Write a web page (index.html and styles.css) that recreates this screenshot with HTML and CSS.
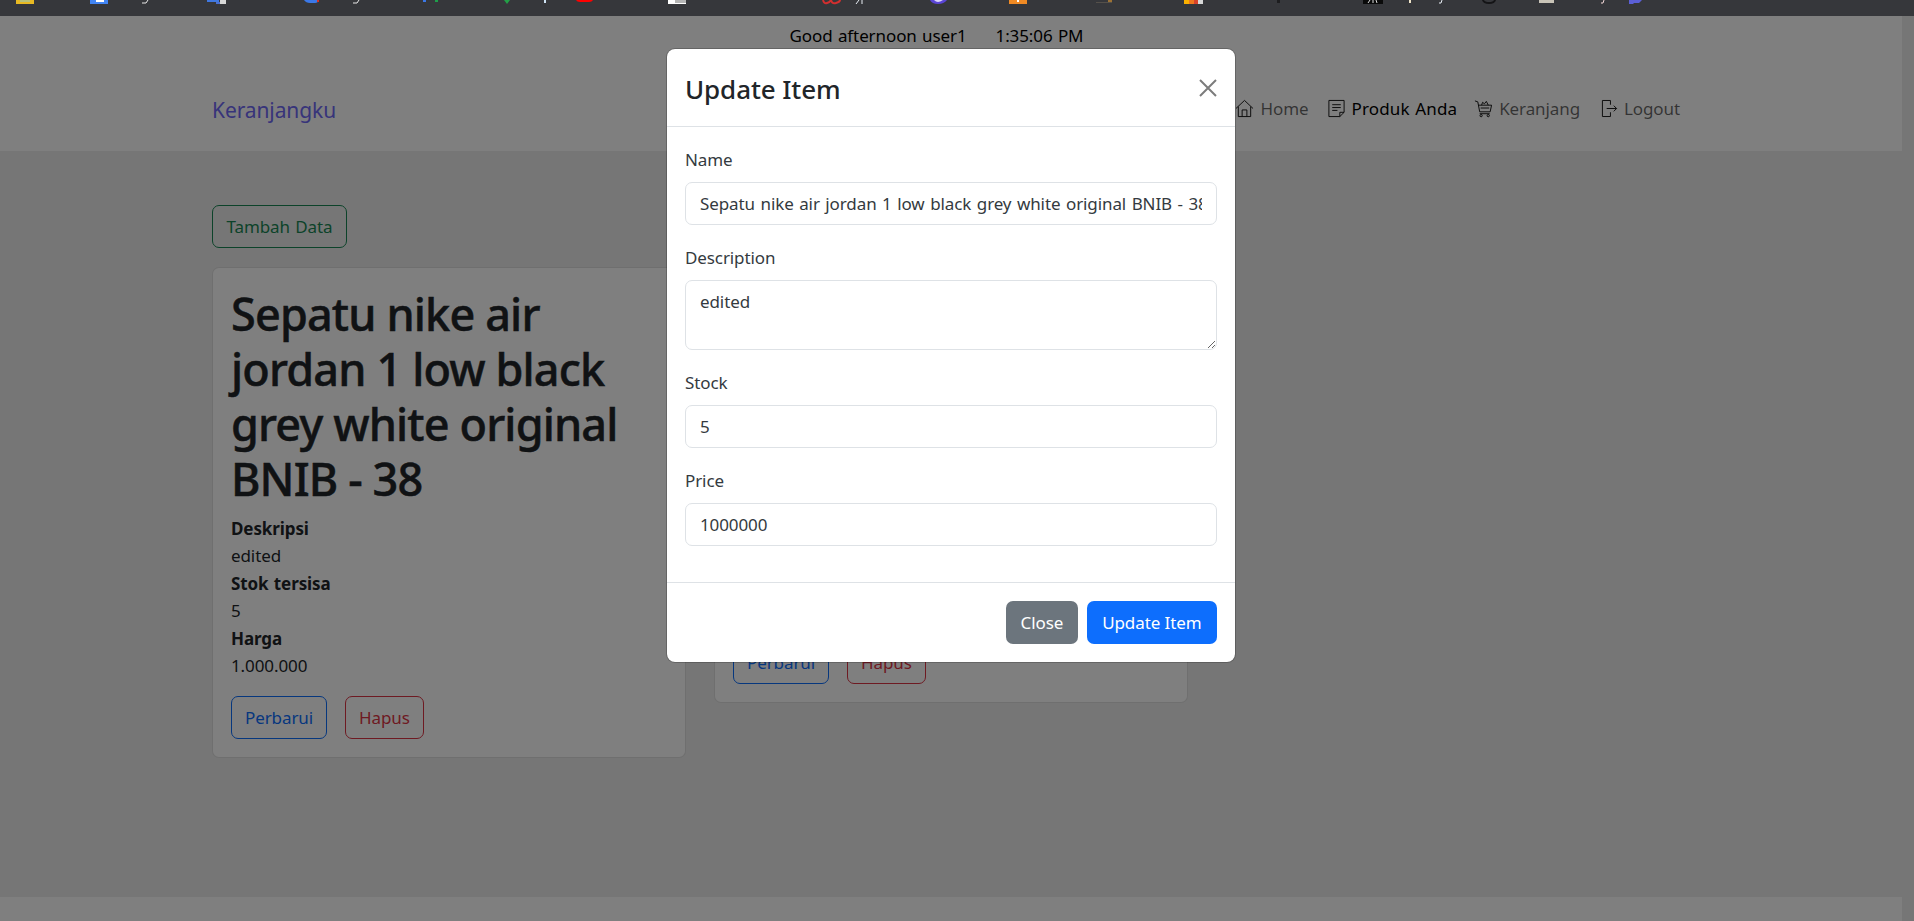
FILE: index.html
```html
<!DOCTYPE html>
<html lang="id">
<head>
  <meta charset="UTF-8">
  <title>Keranjangku</title>
  <meta name="viewport" content="width=device-width, initial-scale=1.0">
  <link rel="stylesheet" href="styles.css">
</head>
<body>

  <!-- Bookmarks strip, cut off by the crop: only the bottom of each icon shows -->
  <svg class="bookmarks" width="1914" height="16" viewBox="0 0 1914 16" aria-hidden="true">
    <rect x="16" y="0" width="18" height="4" fill="#e8b923"/>
    <rect x="20" y="0" width="10" height="2" fill="#b9c27a"/>
    <rect x="90" y="0" width="18" height="4" fill="#4285f4"/>
    <rect x="96" y="0" width="8" height="2" fill="#fff"/>
    <path d="M142 3h4l2-3" stroke="#e8e8e8" fill="none"/>
    <rect x="207" y="0" width="12" height="2" fill="#3f77e0"/>
    <rect x="216" y="2" width="4" height="2" fill="#4a6fd0"/>
    <rect x="220" y="0" width="6" height="4" fill="#d8d8d8"/>
    <path d="M304 0q2 3 6 3h5q3 0 4-3z" fill="#3b78e7"/>
    <rect x="317" y="0" width="2" height="2" fill="#d93025"/>
    <path d="M353 3h4l2-3" stroke="#e8e8e8" fill="none"/>
    <rect x="423" y="0" width="3" height="2" fill="#3b78e7"/>
    <rect x="435" y="0" width="3" height="2" fill="#1e9e4a"/>
    <path d="M504 0h6l-3 4z" fill="#23a047"/>
    <rect x="544" y="0" width="2" height="3" fill="#cfe3f5"/>
    <path d="M576 0h17q-1 2-4 2h-9q-3 0-4-2z" fill="#f00"/>
    <rect x="668" y="0" width="18" height="4" fill="#fff"/>
    <rect x="675" y="0" width="11" height="3" fill="#b5b5b5"/>
    <path d="M823 0q1 4 4 3t4-3q1 4 5 3t4-3" stroke="#d32f2f" stroke-width="2" fill="none"/>
    <path d="M856 4l3-4M862 4v-4" stroke="#e8eef5" fill="none"/>
    <path d="M930 0q2 4 8 4t9-4z" fill="#5a45d6"/>
    <path d="M934 0q2 2 4 2t5-2z" fill="#dcd6fa"/>
    <rect x="1009" y="0" width="18" height="4" fill="#f08a24"/>
    <rect x="1017" y="0" width="2" height="2" fill="#fff"/>
    <rect x="1096" y="2" width="16" height="1" fill="#55504a"/>
    <rect x="1108" y="0" width="4" height="2" fill="#9c7133"/>
    <rect x="1184" y="0" width="5" height="4" fill="#fbb100"/>
    <rect x="1189" y="0" width="5" height="4" fill="#f0781e"/>
    <rect x="1194" y="0" width="4" height="4" fill="#d9432a"/>
    <rect x="1198" y="0" width="5" height="4" fill="#d8d8d8"/>
    <rect x="1277" y="0" width="3" height="3" fill="#1d1d1f"/>
    <rect x="1363" y="0" width="20" height="4" fill="#0a0a0a"/>
    <path d="M1368 3l2-3M1373 3v-3M1377 3l-1-3" stroke="#ddd" fill="none"/>
    <rect x="1409" y="0" width="2" height="3" fill="#f0e4c8"/>
    <path d="M1439 3h2l1-3" stroke="#e8eef5" fill="none"/>
    <path d="M1482 0q1 4 7 4t7-4h-2q-1 2-5 2t-5-2z" fill="#141416"/>
    <rect x="1539" y="0" width="15" height="3" fill="#c9c4b8"/>
    <path d="M1601 3h2l1-3" stroke="#f3d8d8" fill="none"/>
    <path d="M1629 0h13l-3 3h-5l-1 1h-4z" fill="#5b5fd6"/>
  </svg>

  <div class="page">
    <div class="content">
      <header class="navbar">
        <div class="greeting">
          <span>Good afternoon user1</span>
          <span>1:35:06 PM</span>
        </div>
        <div class="nav-row">
          <a class="brand" href="#">Keranjangku</a>
          <nav class="nav-links">
            <a href="#" class="nav-home">
              <svg class="nav-icon" viewBox="0 0 20 20"><path d="M1 10 10 1.5 19 10M3.5 8V18.5H16.5V8M7.5 18.5V11.5H12.5V18.5"/></svg>
              Home
            </a>
            <a href="#" class="active">
              <svg class="nav-icon" viewBox="0 0 20 20"><path d="M2 1.5H18V14L13.5 18.5H2ZM13.5 18.5V14H18M5.5 6H14.5M5.5 9H14.5M5.5 12H11"/></svg>
              Produk Anda
            </a>
            <a href="#">
              <svg class="nav-icon" viewBox="0 0 20 20"><path d="M1 2 4 3 6 13.5H17L18.5 6.5H5M7 9.5H16M8 6.5 9 3.5 11 5 13 2.5 15 6.5M6 15.5H16.5"/><circle cx="7.5" cy="17.5" r="1.2"/><circle cx="15" cy="17.5" r="1.2"/></svg>
              Keranjang
            </a>
            <a href="#">
              <svg class="nav-icon nav-icon-small" viewBox="0 0 18 20"><path d="M10 6V1.5H1.5V18.5H10V14M6 10H16.5M13.5 7 16.5 10 13.5 13"/></svg>
              Logout
            </a>
          </nav>
        </div>
      </header>

      <main class="main">
        <a class="btn btn-outline-success add-btn" href="#">Tambah Data</a>
        <div class="card-grid">
          <div class="card">
            <h1 class="card-title">Sepatu nike air jordan 1 low black grey white original BNIB - 38</h1>
            <div class="card-info">
              <b>Deskripsi</b>
              <span>edited</span>
              <b>Stok tersisa</b>
              <span>5</span>
              <b>Harga</b>
              <span>1.000.000</span>
            </div>
            <div class="card-actions">
              <a class="btn btn-outline-primary" href="#">Perbarui</a>
              <a class="btn btn-outline-danger" href="#">Hapus</a>
            </div>
          </div>
          <div class="card">
            <h1 class="card-title">Sepatu nike air jordan 1 low black grey white</h1>
            <div class="card-info">
              <b>Deskripsi</b>
              <span>edited</span>
              <b>Stok tersisa</b>
              <span>5</span>
              <b>Harga</b>
              <span>1.000.000</span>
            </div>
            <div class="card-actions">
              <a class="btn btn-outline-primary" href="#">Perbarui</a>
              <a class="btn btn-outline-danger" href="#">Hapus</a>
            </div>
          </div>
        </div>
      </main>

      <footer class="footer"></footer>
    </div>

    <!-- Backdrop + modal -->
    <div class="backdrop">
      <div class="modal">
        <div class="modal-header">
          <h5 class="modal-title">Update Item</h5>
          <button class="modal-close" aria-label="Close">
            <svg viewBox="0 0 18 18" width="18" height="18"><path d="M1 1 17 17M17 1 1 17"/></svg>
          </button>
        </div>
        <form class="modal-body">
          <div class="form-group">
            <label for="itemName">Name</label>
            <input id="itemName" type="text" value="Sepatu nike air jordan 1 low black grey white original BNIB - 38">
          </div>
          <div class="form-group">
            <label for="itemDescription">Description</label>
            <textarea id="itemDescription">edited</textarea>
          </div>
          <div class="form-group">
            <label for="itemStock">Stock</label>
            <input id="itemStock" type="number" value="5">
          </div>
          <div class="form-group">
            <label for="itemPrice">Price</label>
            <input id="itemPrice" type="number" value="1000000">
          </div>
        </form>
        <div class="modal-footer">
          <button class="btn btn-secondary">Close</button>
          <button class="btn btn-primary">Update Item</button>
        </div>
      </div>
    </div>
  </div>

</body>
</html>
```

FILE: styles.css
```css
* {
  box-sizing: border-box;
}

html,
body {
  height: 100%;
}

body {
  margin: 0;
  overflow: hidden;
  font-family: "Noto Sans", "Open Sans", sans-serif;
  font-size: 17px;
  line-height: 27px;
  letter-spacing: -0.1px;
  word-spacing: 1px;
  color: #212529;
  background-color: #36373b;
}

.bookmarks {
  display: block;
  background-color: #36373b;
}

.page {
  position: relative;
  height: 905px;
  padding-right: 12px;
  background-color: #ededed;
}

.content {
  display: flex;
  flex-direction: column;
  height: 100%;
}

/* Navbar */
.navbar {
  height: 135px;
  padding: 6px 222px 0 212px;
  background-color: #fff;
}

.greeting {
  display: flex;
  justify-content: center;
  gap: 29px;
  padding-right: 19px;
  color: #000;
}

.nav-row {
  display: flex;
  justify-content: space-between;
  align-items: center;
  margin-top: 47px;
}

.brand {
  font-size: 21px;
  line-height: 29px;
  color: #6f68f5;
  text-decoration: none;
}

.nav-links {
  display: flex;
  gap: 21px;
  margin-top: -4px;
}

.nav-links a {
  display: flex;
  align-items: center;
  gap: 6px;
  color: rgba(0, 0, 0, 0.6);
  text-decoration: none;
}

.nav-links a.nav-home {
  margin-right: -2px;
}

.nav-links a.active {
  gap: 5px;
  margin-right: -4px;
  letter-spacing: 0.15px;
  color: #000;
}

.nav-icon {
  width: 19px;
  height: 19px;
  fill: none;
  stroke: #111;
  stroke-width: 1;
}

.nav-icon-small {
  width: 17px;
}

/* Main */
.main {
  flex: 1;
  padding: 54px 0 0 212px;
}

.btn {
  display: inline-block;
  height: 43px;
  padding: 7px 13.5px;
  border: 1px solid transparent;
  border-radius: 7px;
  font: inherit;
  letter-spacing: inherit;
  text-decoration: none;
  cursor: pointer;
}

.btn-outline-success {
  color: #198754;
  border-color: #198754;
}

.btn-outline-primary {
  color: #0d6efd;
  border-color: #0d6efd;
}

.btn-outline-danger {
  color: #dc3545;
  border-color: #dc3545;
}

.btn-primary {
  color: #fff;
  background-color: #0d6efd;
}

.btn-secondary {
  color: #fff;
  background-color: #6c757d;
}

.add-btn {
  margin-bottom: 19px;
}

.card-grid {
  display: flex;
  align-items: flex-start;
  gap: 28px;
}

.card {
  width: 474px;
  padding: 18px;
  background-color: #fff;
  border: 1px solid rgba(0, 0, 0, 0.125);
  border-radius: 7px;
}

.card-title {
  margin: 0 0 9px;
  font-size: 45px;
  font-weight: 500;
  line-height: 55px;
  letter-spacing: -0.85px;
  word-spacing: 0;
  -webkit-text-stroke: 0.5px #212529;
}

.card-info {
  display: flex;
  flex-direction: column;
  margin-bottom: 17px;
  line-height: 27.4px;
}

.card-actions {
  display: flex;
  gap: 18px;
}

.card-actions .btn {
  padding: 7px 13px;
}

.footer {
  height: 24px;
  background-color: #fff;
}

/* Modal */
.backdrop {
  position: absolute;
  top: 0;
  right: 0;
  bottom: 0;
  left: 0;
  display: flex;
  justify-content: center;
  align-items: flex-start;
  padding: 32px 12px 0 0;
  background-color: rgba(0, 0, 0, 0.5);
}

.modal {
  width: 570px;
  background-color: #fff;
  border: 1px solid rgba(0, 0, 0, 0.2);
  border-radius: 9px;
  background-clip: padding-box;
}

.modal-header {
  display: flex;
  justify-content: space-between;
  align-items: center;
  height: 78px;
  padding: 0 18px;
  border-bottom: 1px solid #dee2e6;
}

.modal-title {
  margin: 0;
  padding-top: 4px;
  font-size: 26px;
  font-weight: 500;
  line-height: 27px;
  word-spacing: 0;
}

.modal-close {
  display: flex;
  padding: 0;
  border: 0;
  background: none;
  cursor: pointer;
}

.modal-close path {
  fill: none;
  stroke: #7c7c7c;
  stroke-width: 2;
}

.modal-body {
  padding: 18px;
}

.form-group {
  margin-bottom: 18px;
  color: #343a40;
}

.form-group label {
  display: block;
  padding-top: 1px;
  margin-bottom: 9px;
}

.form-group input,
.form-group textarea {
  display: block;
  width: 100%;
  height: 43px;
  padding: 7px 14px;
  font: inherit;
  letter-spacing: inherit;
  word-spacing: 1.2px;
  color: #343a40;
  background-color: #fff;
  border: 1px solid #dee2e6;
  border-radius: 7px;
  outline: none;
}

.form-group textarea {
  height: 70px;
}

.modal-footer {
  display: flex;
  justify-content: flex-end;
  gap: 9px;
  padding: 18px;
  border-top: 1px solid #dee2e6;
}

.modal-footer .btn-primary {
  padding: 7px 14.5px;
}
```
